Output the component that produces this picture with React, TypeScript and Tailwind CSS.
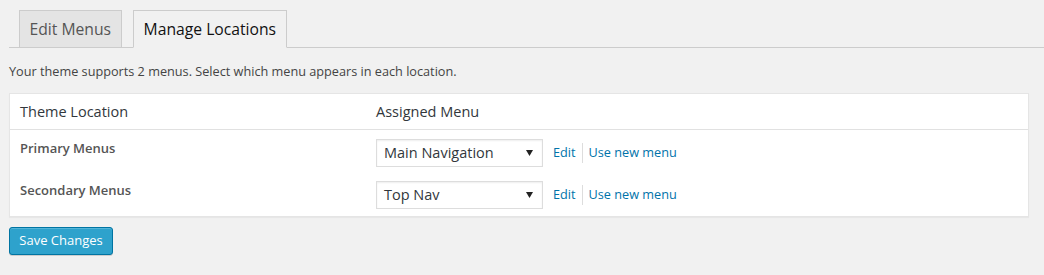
const rows = [
  { label: "Primary Menus", menu: "Main Navigation" },
  { label: "Secondary Menus", menu: "Top Nav" },
]

function MenuSelect({ value }: { value: string }) {
  return (
    <div className="flex items-center justify-between w-[167px] h-[28px] bg-white border border-[#ddd] shadow-[inset_0_1px_2px_rgba(0,0,0,0.07)] pl-[7px] pr-[9px] text-[14.5px] text-[#32373c]">
      <span>{value}</span>
      <svg width="7" height="6" viewBox="0 0 7 6">
        <path d="M0 0 L7 0 L3.5 6 Z" fill="#222" />
      </svg>
    </div>
  )
}

export default function App() {
  return (
    <div
      className="w-full h-[275px] bg-[#f1f1f1] text-[#444]"
      style={{ fontFamily: '"Open Sans", "Noto Sans", sans-serif' }}
    >
      {/* tabs */}
      <div className="flex items-end gap-[11px] ml-[9px] pl-[10px] pt-[10px] border-b border-[#ccc]">
        <div className="-mb-px h-[38px] px-[9.5px] border border-[#ccc] bg-[#e4e4e4] text-[15.7px] leading-[36px] text-[#555]">
          Edit Menus
        </div>
        <div className="-mb-px h-[38px] px-[10px] border border-[#ccc] border-b-[#f1f1f1] bg-[#f1f1f1] text-[15.7px] leading-[36px] text-[#111]">
          Manage Locations
        </div>
      </div>

      <p className="mt-[14px] ml-[9px] text-[12.7px] leading-[19px] text-[#444]">
        Your theme supports 2 menus. Select which menu appears in each location.
      </p>

      {/* locations table */}
      <div className="mt-[12px] ml-[9px] mr-[15px] bg-white border border-[#e5e5e5] shadow-[0_1px_1px_rgba(0,0,0,0.04)]">
        <div className="grid grid-cols-[356px_1fr] h-[36px] items-center border-b border-[#e1e1e1] text-[14.5px] text-[#32373c]">
          <div className="px-[10px]">Theme Location</div>
          <div className="px-[10px]">Assigned Menu</div>
        </div>
        <div className="pt-[9px] pb-[7px] flex flex-col gap-[14px]">
          {rows.map((r) => (
            <div key={r.label} className="grid grid-cols-[356px_1fr]">
              <div className="px-[10px] text-[13px] font-semibold leading-[18px] text-[#555]">
                {r.label}
              </div>
              <div className="px-[10px] flex items-center">
                <MenuSelect value={r.menu} />
                <div className="flex items-center ml-[10px] text-[12.7px] text-[#0073aa]">
                  <span>Edit</span>
                  <span className="mx-[6px] w-px h-[20px] bg-[#ddd]" />
                  <span>Use new menu</span>
                </div>
              </div>
            </div>
          ))}
        </div>
      </div>

      <button className="mt-[10px] ml-[9px] w-[104px] h-[28px] rounded-[3px] bg-[#2ea2cc] border border-[#0074a2] shadow-[inset_0_1px_0_rgba(120,200,230,0.5),0_1px_0_rgba(0,0,0,0.15)] text-[13px] text-white">
        Save Changes
      </button>
    </div>
  )
}
